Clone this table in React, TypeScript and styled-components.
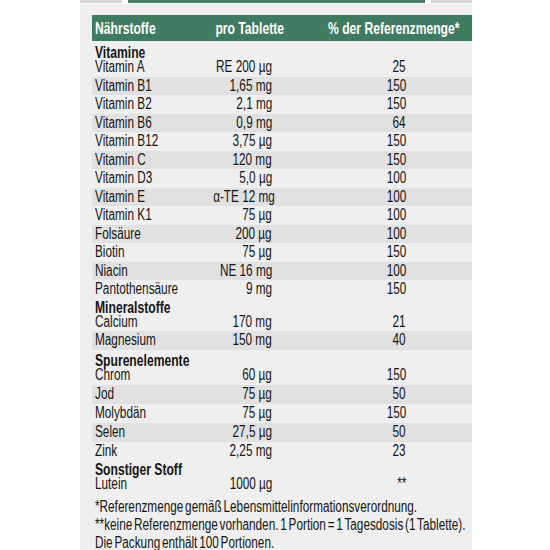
import React from 'react';
import styled, { createGlobalStyle } from 'styled-components';

const GlobalStyle = createGlobalStyle`
  html, body {
    margin: 0;
    padding: 0;
    background: #ffffff;
  }
  body {
    font-family: 'Liberation Sans', Arial, sans-serif;
    color: #151515;
    overflow-x: hidden;
  }
`;

type Row = { name: string; amount: string; percent: string };
type Section = { title: string; gap: number; rowHeight: number; rows: Row[] };

const sections: Section[] = [
  {
    title: 'Vitamine',
    gap: 6,
    rowHeight: 18.5,
    rows: [
      { name: 'Vitamin A', amount: 'RE 200 µg', percent: '25' },
      { name: 'Vitamin B1', amount: '1,65 mg', percent: '150' },
      { name: 'Vitamin B2', amount: '2,1 mg', percent: '150' },
      { name: 'Vitamin B6', amount: '0,9 mg', percent: '64' },
      { name: 'Vitamin B12', amount: '3,75 µg', percent: '150' },
      { name: 'Vitamin C', amount: '120 mg', percent: '150' },
      { name: 'Vitamin D3', amount: '5,0 µg', percent: '100' },
      { name: 'Vitamin E', amount: 'α-TE 12 mg', percent: '100' },
      { name: 'Vitamin K1', amount: '75 µg', percent: '100' },
      { name: 'Folsäure', amount: '200 µg', percent: '100' },
      { name: 'Biotin', amount: '75 µg', percent: '150' },
      { name: 'Niacin', amount: 'NE 16 mg', percent: '100' },
      { name: 'Pantothensäure', amount: '9 mg', percent: '150' },
    ],
  },
  {
    title: 'Mineralstoffe',
    gap: 3,
    rowHeight: 18.5,
    rows: [
      { name: 'Calcium', amount: '170 mg', percent: '21' },
      { name: 'Magnesium', amount: '150 mg', percent: '40' },
    ],
  },
  {
    title: 'Spurenelemente',
    gap: 5,
    rowHeight: 19,
    rows: [
      { name: 'Chrom', amount: '60 µg', percent: '150' },
      { name: 'Jod', amount: '75 µg', percent: '50' },
      { name: 'Molybdän', amount: '75 µg', percent: '150' },
      { name: 'Selen', amount: '27,5 µg', percent: '50' },
      { name: 'Zink', amount: '2,25 mg', percent: '23' },
    ],
  },
  {
    title: 'Sonstiger Stoff',
    gap: 3,
    rowHeight: 18.5,
    rows: [{ name: 'Lutein', amount: '1000 µg', percent: '**' }],
  },
];

const footnotes = [
  '*Referenzmenge gemäß Lebensmittelinformationsverordnung.',
  '**keine Referenzmenge vorhanden. 1 Portion = 1 Tagesdosis (1 Tablette).',
  'Die Packung enthält 100 Portionen.',
];

const Page = styled.div`
  width: 392px;
  margin-left: 80px;
`;

const TopStrip = styled.div`
  display: flex;
  gap: 6px;
  height: 3px;
  padding-bottom: 1px;
  background: #ffffff;
`;

const StripPiece = styled.div<{ $w: number; $green?: boolean }>`
  width: ${(p) => p.$w}px;
  background: ${(p) => (p.$green ? '#4a7f66' : '#d6d6d6')};
`;

const Panel = styled.div`
  background: #efefef;
  padding: 11px 0 0 12px;
  overflow: hidden;
`;

/* the print uses a condensed face; squeeze Arial-width text to match */
const Narrow = styled.span<{ $right?: boolean }>`
  display: inline-block;
  white-space: nowrap;
  transform: scaleX(0.745);
  transform-origin: ${(p) => (p.$right ? 'right' : 'left')} center;
`;

const HeaderBar = styled.div`
  display: grid;
  grid-template-columns: 100px 86px 181px 1fr;
  align-items: center;
  height: 26px;
  background: #3f7b61;
  color: #ffffff;
  font-weight: bold;
  font-size: 16.3px;
`;

const Cell = styled.div<{ $right?: boolean }>`
  padding-left: ${(p) => (p.$right ? 0 : 3)}px;
  text-align: ${(p) => (p.$right ? 'right' : 'left')};
  white-space: nowrap;
`;

const SectionTitle = styled.div<{ $gap: number }>`
  font-weight: bold;
  font-size: 16.3px;
  line-height: 11px;
  padding: ${(p) => p.$gap}px 0 0 3px;
`;

const DataRow = styled.div<{ $shaded: boolean; $h: number }>`
  display: grid;
  grid-template-columns: 100px 80px 134px 1fr;
  align-items: center;
  height: ${(p) => p.$h}px;
  font-size: 15.8px;
  background: ${(p) => (p.$shaded ? '#e1e1e1' : 'transparent')};
`;

const Footnote = styled.div`
  padding: 4.5px 0 0 3px;
  font-size: 15.8px;
  line-height: 18px;
  word-spacing: -2px;
`;

const FootLine = styled.div`
  white-space: nowrap;
`;

export default function App() {
  return (
    <Page>
      <GlobalStyle />
      <TopStrip>
        <StripPiece $w={42} />
        <StripPiece $w={297} $green />
        <StripPiece $w={41} />
      </TopStrip>
      <Panel>
        <HeaderBar>
          <Cell>
            <Narrow>Nährstoffe</Narrow>
          </Cell>
          <Cell $right>
            <Narrow $right>pro Tablette</Narrow>
          </Cell>
          <Cell $right>
            <Narrow $right>% der Referenzmenge*</Narrow>
          </Cell>
          <span />
        </HeaderBar>
        {sections.map((section) => (
          <React.Fragment key={section.title}>
            <SectionTitle $gap={section.gap}>
              <Narrow>{section.title}</Narrow>
            </SectionTitle>
            {section.rows.map((row, i) => (
              <DataRow key={row.name} $shaded={i % 2 === 1} $h={section.rowHeight}>
                <Cell>
                  <Narrow>{row.name}</Narrow>
                </Cell>
                <Cell $right>
                  <Narrow $right>{row.amount}</Narrow>
                </Cell>
                <Cell $right>
                  <Narrow $right>{row.percent}</Narrow>
                </Cell>
                <span />
              </DataRow>
            ))}
          </React.Fragment>
        ))}
        <Footnote>
          {footnotes.map((line) => (
            <FootLine key={line}>
              <Narrow>{line}</Narrow>
            </FootLine>
          ))}
        </Footnote>
      </Panel>
    </Page>
  );
}
